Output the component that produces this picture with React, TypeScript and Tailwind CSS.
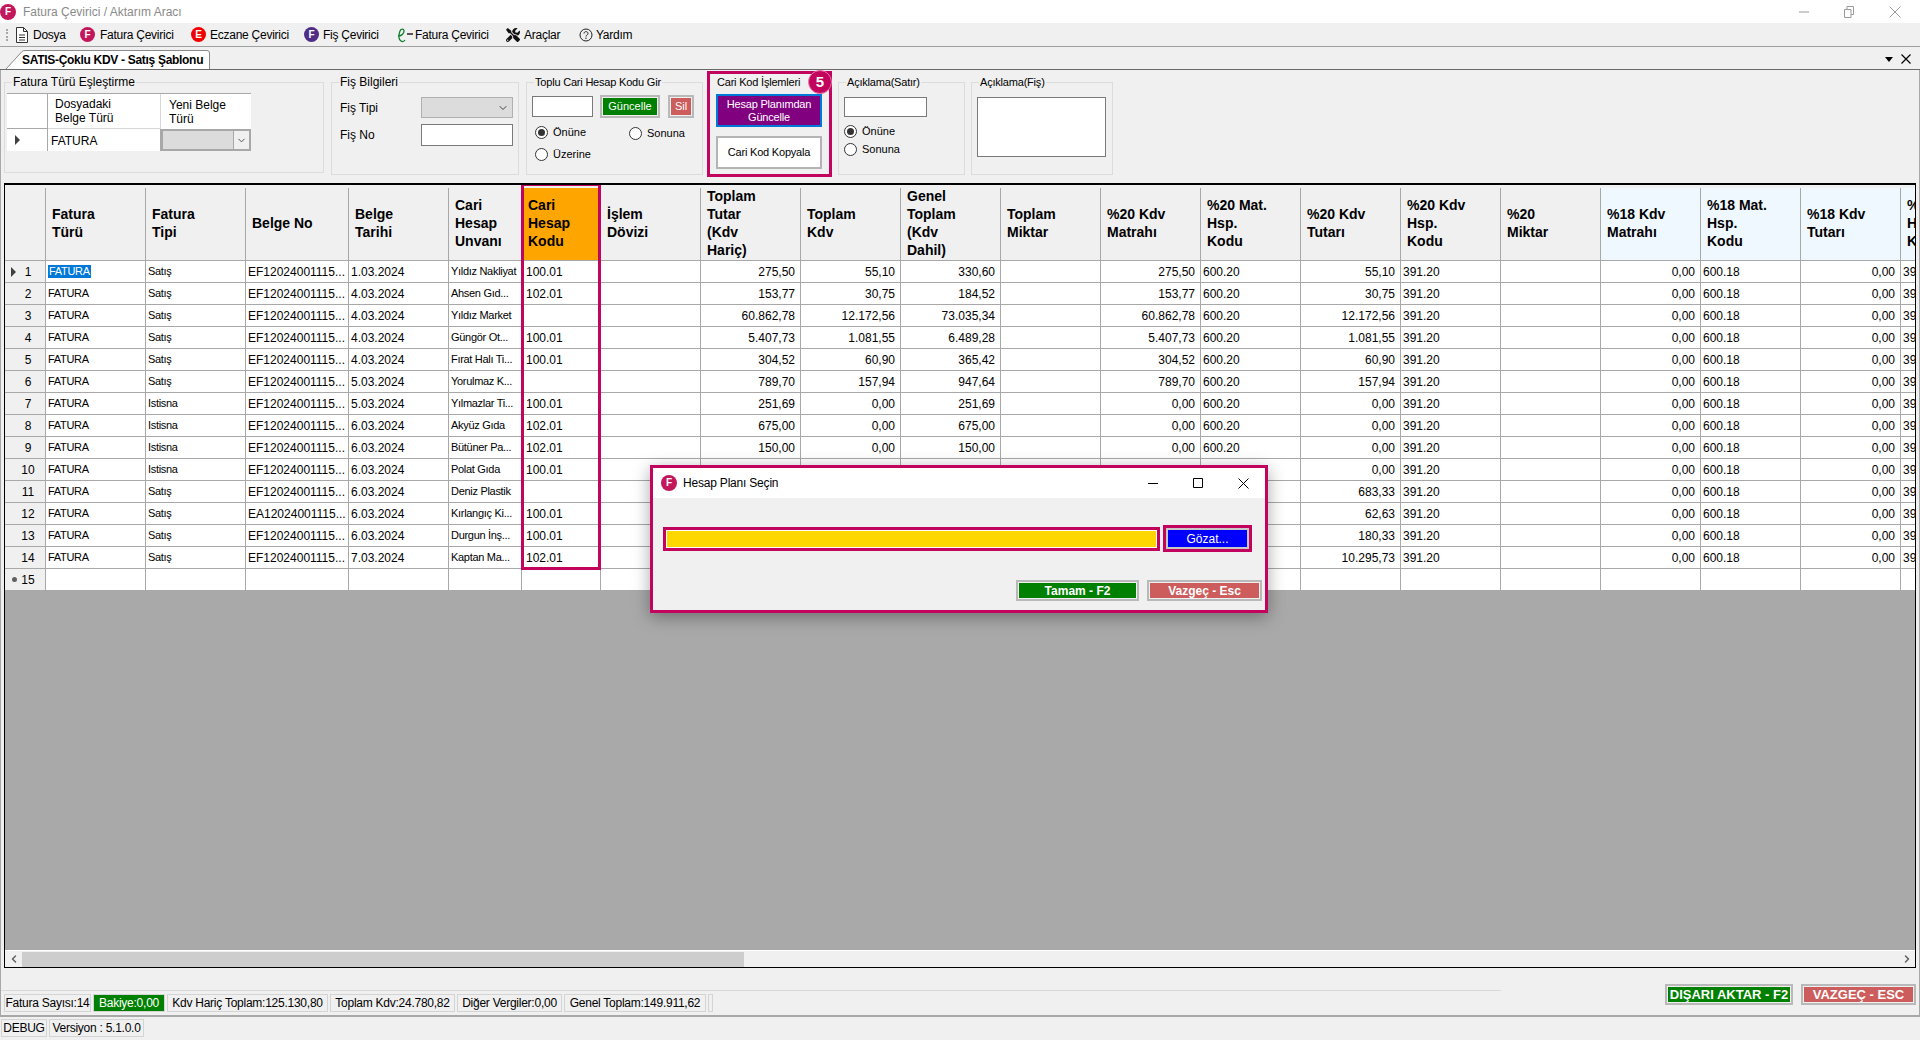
import { ChevronLeft, ChevronRight, ChevronDown } from "lucide-react";
import { FaTools } from "react-icons/fa";
import React from "react";

const gridCols = "grid grid-cols-[41px_100px_100px_103px_100px_73px_79px_repeat(14,100px)] w-[2000px]";

const headers = [
    "Fatura\nTürü",
    "Fatura\nTipi",
    "Belge No",
    "Belge\nTarihi",
    "Cari\nHesap\nUnvanı",
    "Cari\nHesap\nKodu",
    "İşlem\nDövizi",
    "Toplam\nTutar\n(Kdv\nHariç)",
    "Toplam\nKdv",
    "Genel\nToplam\n(Kdv\nDahil)",
    "Toplam\nMiktar",
    "%20 Kdv\nMatrahı",
    "%20 Mat.\nHsp.\nKodu",
    "%20 Kdv\nTutarı",
    "%20 Kdv\nHsp.\nKodu",
    "%20\nMiktar",
    "%18 Kdv\nMatrahı",
    "%18 Mat.\nHsp.\nKodu",
    "%18 Kdv\nTutarı",
    "%18 Kdv\nHsp.\nKodu",
];

// tipi, belge no, tarih, unvan, kod, tutar, kdv, genel, %20 matrah, %20 tutar
const rows = [
    ["Satış", "EF12024001115...", "1.03.2024", "Yıldız Nakliyat", "100.01", "275,50", "55,10", "330,60", "275,50", "55,10"],
    ["Satış", "EF12024001115...", "4.03.2024", "Ahsen Gıd...", "102.01", "153,77", "30,75", "184,52", "153,77", "30,75"],
    ["Satış", "EF12024001115...", "4.03.2024", "Yıldız Market", "", "60.862,78", "12.172,56", "73.035,34", "60.862,78", "12.172,56"],
    ["Satış", "EF12024001115...", "4.03.2024", "Güngör Ot...", "100.01", "5.407,73", "1.081,55", "6.489,28", "5.407,73", "1.081,55"],
    ["Satış", "EF12024001115...", "4.03.2024", "Fırat Halı Ti...", "100.01", "304,52", "60,90", "365,42", "304,52", "60,90"],
    ["Satış", "EF12024001115...", "5.03.2024", "Yorulmaz K...", "", "789,70", "157,94", "947,64", "789,70", "157,94"],
    ["Istisna", "EF12024001115...", "5.03.2024", "Yılmazlar Ti...", "100.01", "251,69", "0,00", "251,69", "0,00", "0,00"],
    ["Istisna", "EF12024001115...", "6.03.2024", "Akyüz Gıda", "102.01", "675,00", "0,00", "675,00", "0,00", "0,00"],
    ["Istisna", "EF12024001115...", "6.03.2024", "Bütüner Pa...", "102.01", "150,00", "0,00", "150,00", "0,00", "0,00"],
    ["Istisna", "EF12024001115...", "6.03.2024", "Polat Gıda", "100.01", "", "", "", "", "0,00"],
    ["Satış", "EF12024001115...", "6.03.2024", "Deniz Plastik", "", "", "", "", "", "683,33"],
    ["Satış", "EA12024001115...", "6.03.2024", "Kırlangıç Ki...", "100.01", "", "", "", "", "62,63"],
    ["Satış", "EF12024001115...", "6.03.2024", "Durgun İnş...", "100.01", "", "", "", "", "180,33"],
    ["Satış", "EF12024001115...", "7.03.2024", "Kaptan Ma...", "102.01", "", "", "", "", "10.295,73"],
];

function Logo({ letter, color, size }: { letter: string; color: string; size: string }) {
    return (
        <span className={`${size} ${color} rounded-full flex items-center justify-center text-white font-bold text-[10px] leading-none shrink-0`}>
            {letter}
        </span>
    );
}

function Radio({ label, checked, className }: { label: string; checked?: boolean; className?: string }) {
    return (
        <div className={`flex items-center gap-[5px] h-[13px] text-[11px] ${className ?? ""}`}>
            <span className="w-[13px] h-[13px] rounded-full border border-[#333] bg-white flex items-center justify-center shrink-0">
                {checked && <span className="w-[7px] h-[7px] rounded-full bg-[#333]" />}
            </span>
            <span>{label}</span>
        </div>
    );
}

function Group({ title, small, className, children }: { title: string; small?: boolean; className: string; children?: React.ReactNode }) {
    return (
        <div className={`relative border border-[#dcdcdc] ${className}`}>
            <span className={`absolute -top-[8px] left-[7px] bg-[#f0f0f0] px-[1px] leading-[14px] whitespace-nowrap ${small ? "text-[11px] tracking-[-0.2px]" : ""}`}>{title}</span>
            {children}
        </div>
    );
}

function ColorButton({ label, color, className }: { label: string; color: string; className: string }) {
    return (
        <div className={`border-2 border-[#b9b9b9] p-[1px] bg-[#f0f0f0] flex shrink-0 ${className}`}>
            <div className={`${color} flex-1 flex items-center justify-center text-white whitespace-nowrap`}>{label}</div>
        </div>
    );
}

function HeaderCell({ text, i }: { text: string; i: number }) {
    const bg = i === 5 ? "bg-[#ffa500]" : i >= 16 ? "bg-[#f0f8ff]" : "bg-[#f0f0f0]";
    return (
        <div className={`${bg} h-[72px] border-r border-[#a8a8a8] pl-[6px] pb-[2px] flex items-center text-[14px] font-bold leading-[18px] text-black whitespace-pre-line overflow-hidden`}>
            <span>{text}</span>
        </div>
    );
}

function Cell({ text, right, word, className, selected }: { text: string; right?: boolean; word?: boolean; className?: string; selected?: boolean }) {
    return (
        <div className={`border-r border-[#a8a8a8] h-[21px] flex items-center whitespace-nowrap overflow-hidden ${word ? "text-[11px] tracking-[-0.3px]" : ""} ${right ? "justify-end pr-[5px]" : (className ?? "pl-[2px]")}`}>
            {selected ? <span className="bg-[#0078d7] text-white px-[1px] h-[13px] leading-[13px]">{text}</span> : text}
        </div>
    );
}

function RowHead({ n, mark }: { n: number; mark?: "arrow" | "dot" }) {
    return (
        <div className="bg-[#f0f0f0] border-r border-[#a8a8a8] h-[21px] flex items-center text-[12px]">
            <span className="w-[12px] flex justify-end">
                {mark === "arrow" && <span className="border-y-[5px] border-y-transparent border-l-[5px] border-l-[#404040] mr-[1px]" />}
                {mark === "dot" && <span className="w-[5px] h-[5px] rounded-full bg-[#606060]" />}
            </span>
            <span className="w-[22px] text-center">{n}</span>
        </div>
    );
}

function TableRow({ r, n }: { r: string[]; n: number }) {
    return (
        <div className={`${gridCols} border-b border-[#a8a8a8] bg-white`}>
            <RowHead n={n} mark={n === 1 ? "arrow" : undefined} />
            <Cell text="FATURA" word selected={n === 1} />
            <Cell text={r[0]} word />
            <Cell text={r[1]} />
            <Cell text={r[2]} />
            <Cell text={r[3]} word />
            <Cell text={r[4]} className="pl-[4px]" />
            <Cell text="" />
            <Cell text={r[5]} right />
            <Cell text={r[6]} right />
            <Cell text={r[7]} right />
            <Cell text="" />
            <Cell text={r[8]} right />
            <Cell text={n < 10 ? "600.20" : ""} />
            <Cell text={r[9]} right />
            <Cell text="391.20" />
            <Cell text="" />
            <Cell text="0,00" right />
            <Cell text="600.18" />
            <Cell text="0,00" right />
            <Cell text="391.18" />
        </div>
    );
}

function StatusItem({ text, className }: { text: string; className: string }) {
    return (
        <div className={`h-[18px] border border-[#d4d4d4] flex items-center justify-center whitespace-nowrap tracking-[-0.25px] ${className}`}>{text}</div>
    );
}

function MenuText({ text, className }: { text: string; className: string }) {
    return <span className={`tracking-[-0.25px] whitespace-nowrap ${className}`}>{text}</span>;
}

export default function App() {
    return (
        <div className="w-[1920px] h-[1040px] relative overflow-hidden flex flex-col bg-[#f0f0f0] text-[12px] text-black [font-family:'Liberation_Sans',Arial,sans-serif]">
            {/* title bar */}
            <div className="h-[23px] bg-white flex items-center shrink-0">
                <Logo letter="F" color="bg-[#c2185b]" size="w-[16px] h-[16px]" />
                <span className="ml-[7px] text-[#8a8a8a]">Fatura Çevirici / Aktarım Aracı</span>
                <div className="ml-auto flex items-center text-[#9a9a9a] mr-[16px]">
                    <svg width="10" height="10" viewBox="0 0 10 10" className="mr-[35px]"><path d="M0 5h10" stroke="currentColor" /></svg>
                    <svg width="10" height="12" viewBox="0 0 10 12" className="mr-[35px]" fill="none" stroke="currentColor"><path d="M.5 3.5h6.5v8H.5zM3 3.5V.5h6.5v8H7" /></svg>
                    <svg width="12" height="12" viewBox="0 0 12 12" className="mr-[3px]" stroke="currentColor"><path d="M.5.5l11 11M11.500.5l-11 11" /></svg>
                </div>
            </div>

            {/* menu */}
            <div className="h-[24px] shrink-0 flex items-center border-b border-[#a0a0a0]">
                <span className="ml-[6px] w-[3px] h-[12px] border-l-2 border-dotted border-[#a8a8a8]" />
                <svg width="12" height="16" viewBox="0 0 12 16" className="ml-[7px]" fill="#fff" stroke="#333">
                    <path d="M.5.500h7l4 4v11H.5z" />
                    <path d="M7.500.500v4h4M3 8h6M3 10.500h6M3 13h6" fill="none" />
                </svg>
                <MenuText text="Dosya" className="ml-[5px] w-[32px]" />
                <Logo letter="F" color="bg-[#c2185b]" size="w-[15px] h-[15px] ml-[15px]" />
                <MenuText text="Fatura Çevirici" className="ml-[5px] w-[75px]" />
                <Logo letter="E" color="bg-[#f00000]" size="w-[15px] h-[15px] ml-[16px]" />
                <MenuText text="Eczane Çevirici" className="ml-[4px] w-[78px]" />
                <Logo letter="F" color="bg-[#4f2d86]" size="w-[15px] h-[15px] ml-[16px]" />
                <MenuText text="Fiş Çevirici" className="ml-[4px] w-[56px]" />
                <svg width="17" height="16" viewBox="0 0 17 16" className="ml-[17px]" fill="none">
                    <path d="M2 9c3 0 6-2 6-5 0-2.500-3-2.500-4 0-1.500 4-2 8 1 10 1.500 1 3 .5 4-1" stroke="#0b7d2a" strokeWidth="1.300" />
                    <path d="M11 7h6" stroke="#222" strokeWidth="1.500" />
                </svg>
                <MenuText text="Fatura Çevirici" className="ml-[2px] w-[74px]" />
                <FaTools size={14} className="ml-[17px] text-[#111]" />
                <MenuText text="Araçlar" className="ml-[4px] w-[37px]" />
                <svg width="14" height="14" viewBox="0 0 14 14" className="ml-[18px]" fill="none" stroke="#222">
                    <circle cx="7" cy="7" r="6" />
                    <path d="M5 5.500c0-2.500 4-2.500 4 0 0 1.500-2 1.500-2 3M7 9.500v1.500" />
                </svg>
                <MenuText text="Yardım" className="ml-[3px] w-[37px]" />
            </div>

            {/* tab strip */}
            <div className="h-[23px] shrink-0 flex items-end border-b border-[#696969] relative">
                <div className="relative ml-[6px] w-[204px] h-[19px] flex items-center pl-[16px] font-bold whitespace-nowrap">
                    <svg className="absolute inset-0" width="204" height="19" viewBox="0 0 204 19" fill="#fff" stroke="#8a8a8a">
                        <path d="M0 19L16 1.500Q17 .500 19 .500H201Q203.500 .500 203.500 3V19" />
                    </svg>
                    <span className="relative tracking-[-0.3px]">SATIS-Çoklu KDV - Satış Şablonu</span>
                </div>
                <div className="ml-auto mr-[9px] mb-[5px] flex items-center gap-[8px]">
                    <span className="border-x-[4px] border-x-transparent border-t-[5px] border-t-black" />
                    <svg width="10" height="10" viewBox="0 0 10 10" stroke="#000" strokeWidth="1.200"><path d="M.5.500l9 9M9.500.500l-9 9" /></svg>
                </div>
            </div>

            {/* content */}
            <div className="flex-1 flex flex-col border-x border-b-2 border-[#a8a8a8] min-h-0">
                <div className="h-[113px] shrink-0 pt-[12px] pl-[3px] flex items-start">
                    <Group title="Fatura Türü Eşleştirme" className="w-[320px] h-[91px]">
                        <div className="ml-[2px] mt-[10px] w-[244px] border-t border-[#a8a8a8] grid grid-cols-[41px_113px_90px]">
                            <div className="h-[35px] bg-white border-r border-b border-[#a8a8a8]" />
                            <div className="h-[35px] bg-white border-r border-b border-[#d8d8d8] pl-[7px] leading-[14px] flex items-center">Dosyadaki<br />Belge Türü</div>
                            <div className="h-[35px] bg-white pl-[8px] leading-[14px] flex items-center">Yeni Belge<br />Türü</div>
                            <div className="h-[22px] bg-white border-r border-[#a8a8a8] flex items-center pl-[8px]">
                                <span className="border-y-[5px] border-y-transparent border-l-[5px] border-l-[#404040]" />
                            </div>
                            <div className="h-[22px] bg-white border-r border-[#a8a8a8] pl-[3px] pt-[1px] flex items-center">FATURA</div>
                            <div className="h-[22px] bg-[#dcdcdc] border-2 border-[#a8a8a8] flex justify-end items-center">
                                <span className="w-[16px] h-full bg-[#f0f0f0] flex items-center justify-center border-l border-[#a8a8a8]">
                                    <ChevronDown size={11} className="text-[#444]" />
                                </span>
                            </div>
                        </div>
                    </Group>
                    <Group title="Fiş Bilgileri" className="ml-[7px] w-[188px] h-[93px]">
                        <div className="pl-[8px] pt-[14px] flex flex-col gap-[6px]">
                            <div className="flex items-center">
                                <span className="w-[81px]">Fiş Tipi</span>
                                <span className="w-[92px] h-[21px] bg-[#dcdcdc] border border-[#b0b0b0] flex items-center justify-end pr-[3px]">
                                    <ChevronDown size={12} className="text-[#444]" />
                                </span>
                            </div>
                            <div className="flex items-center">
                                <span className="w-[81px]">Fiş No</span>
                                <span className="w-[92px] h-[22px] bg-white border border-[#7a7a7a]" />
                            </div>
                        </div>
                    </Group>
                    <Group title="Toplu Cari Hesap Kodu Gir" small className="ml-[7px] w-[177px] h-[93px]">
                        <div className="pl-[5px] pt-[12px] flex items-center text-[11px]">
                            <span className="w-[61px] h-[21px] bg-white border border-[#7a7a7a]" />
                            <ColorButton label="Güncelle" color="bg-[#008000]" className="ml-[7px] w-[60px] h-[23px]" />
                            <ColorButton label="Sil" color="bg-[#cd5c5c]" className="ml-[8px] w-[26px] h-[23px]" />
                        </div>
                        <div className="pl-[8px] mt-[8px] flex">
                            <div className="flex flex-col gap-[9px] w-[94px]">
                                <Radio label="Önüne" checked />
                                <Radio label="Üzerine" />
                            </div>
                            <Radio label="Sonuna" className="mt-[1px]" />
                        </div>
                    </Group>
                    <div className="relative ml-[4px] -mt-[11px] w-[125px] h-[106px] border-[3px] border-[#c2045e] shrink-0 text-[11px] tracking-[-0.2px]">
                        <span className="block ml-[7px] mt-[1px] leading-[14px]">Cari Kod İşlemleri</span>
                        <div className="ml-[6px] mt-[5px] w-[106px] h-[33px] border-2 border-[#0078d7] bg-[#800080] text-white leading-[13px] text-center flex items-center justify-center">
                            Hesap Planımdan<br />Güncelle
                        </div>
                        <div className="ml-[6px] mt-[9px] w-[106px] h-[33px] border-2 border-[#b4b4b4] bg-white p-[1px] flex items-center justify-center">Cari Kod Kopyala</div>
                        <span className="absolute left-[98px] -top-[4px] w-[24px] h-[24px] rounded-full bg-[#c2045e] border border-[#e878a8] text-white font-bold text-[15px] tracking-normal flex items-center justify-center">5</span>
                    </div>
                    <Group title="Açıklama(Satır)" small className="ml-[6px] w-[127px] h-[93px]">
                        <div className="pl-[5px] pt-[14px] flex flex-col">
                            <span className="w-[83px] h-[20px] bg-white border border-[#7a7a7a]" />
                            <Radio label="Önüne" checked className="mt-[8px]" />
                            <Radio label="Sonuna" className="mt-[5px]" />
                        </div>
                    </Group>
                    <Group title="Açıklama(Fiş)" small className="ml-[6px] w-[142px] h-[93px]">
                        <div className="pl-[5px] pt-[14px]">
                            <div className="w-[129px] h-[60px] bg-white border border-[#7a7a7a]" />
                        </div>
                    </Group>
                </div>

                {/* data grid */}
                <div className="relative ml-[3px] mr-[3px] h-[785px] shrink-0 border border-black border-t-2 flex flex-col overflow-hidden bg-[#a9a9a9]">
                    <div className={`${gridCols} pt-[3px] bg-[#f0f0f0] border-b border-[#a8a8a8]`}>
                        <div className="h-[72px] border-r border-[#a8a8a8]" />
                        {headers.map((h, i) => (
                            <HeaderCell key={h} text={h} i={i} />
                        ))}
                    </div>
                    {rows.map((r, i) => (
                        <TableRow key={i} r={r} n={i + 1} />
                    ))}
                    <div className={`${gridCols} border-b border-[#a8a8a8] bg-white`}>
                        <RowHead n={15} mark="dot" />
                        {headers.map((h) => (
                            <Cell key={h} text="" />
                        ))}
                    </div>
                    <div className="flex-1" />
                    <div className="h-[17px] shrink-0 bg-[#f0f0f0] border-t border-white flex items-center">
                        <span className="w-[17px] flex justify-center"><ChevronLeft size={12} strokeWidth={3} className="text-[#606060]" /></span>
                        <span className="w-[722px] h-[15px] bg-[#cdcdcd]" />
                        <span className="ml-auto w-[17px] flex justify-center"><ChevronRight size={12} strokeWidth={3} className="text-[#606060]" /></span>
                    </div>
                    <div className="absolute left-[516px] -top-[2px] w-[80px] h-[387px] border-[3px] border-[#c2045e]" />
                </div>

                {/* footer */}
                <div className="flex-1 flex">
                    <div className="w-[1500px]">
                        <div className="h-[23px] border-b border-[#d8d8d8]" />
                        <div className="mt-[3px] ml-[3px] flex gap-[2px]">
                            <StatusItem text="Fatura Sayısı:14" className="w-[87px]" />
                            <StatusItem text="Bakiye:0,00" className="w-[72px] bg-[#008000] text-white" />
                            <StatusItem text="Kdv Hariç Toplam:125.130,80" className="w-[161px]" />
                            <StatusItem text="Toplam Kdv:24.780,82" className="w-[125px]" />
                            <StatusItem text="Diğer Vergiler:0,00" className="w-[105px]" />
                            <StatusItem text="Genel Toplam:149.911,62" className="w-[142px]" />
                            <div className="w-[5px] h-[18px] border border-[#d4d4d4]" />
                        </div>
                    </div>
                    <div className="ml-auto mr-[3px] mt-[16px] flex gap-[8px] font-bold text-[13px]">
                        <ColorButton label="DIŞARI AKTAR - F2" color="bg-[#008000]" className="w-[128px] h-[21px]" />
                        <ColorButton label="VAZGEÇ - ESC" color="bg-[#cd5c5c]" className="w-[115px] h-[21px]" />
                    </div>
                </div>
            </div>

            {/* status bar */}
            <div className="h-[23px] shrink-0 pl-[1px] pt-[2px] flex gap-[2px]">
                <StatusItem text="DEBUG" className="w-[46px]" />
                <StatusItem text="Versiyon : 5.1.0.0" className="w-[95px]" />
            </div>

            {/* dialog */}
            <div className="absolute left-[650px] top-[465px] w-[618px] h-[148px] border-[3px] border-[#c2045e] bg-[#f0f0f0] shadow-[0_4px_16px_rgba(0,0,0,0.35)] flex flex-col">
                <div className="h-[30px] bg-white shrink-0 flex items-center">
                    <Logo letter="F" color="bg-[#c2185b]" size="w-[16px] h-[16px] ml-[8px]" />
                    <span className="ml-[6px] tracking-[-0.2px]">Hesap Planı Seçin</span>
                    <div className="ml-auto flex items-center text-black">
                        <svg width="10" height="10" viewBox="0 0 10 10" className="mr-[35px]"><path d="M0 5.500h10" stroke="currentColor" /></svg>
                        <svg width="10" height="10" viewBox="0 0 10 10" className="mr-[35px]" fill="none" stroke="currentColor"><path d="M.5.500h9v9h-9z" /></svg>
                        <svg width="11" height="11" viewBox="0 0 11 11" className="mr-[16px]" stroke="currentColor"><path d="M.5.500l10 10M10.500.500l-10 10" /></svg>
                    </div>
                </div>
                <div className="pl-[10px] pt-[28px] flex items-center gap-[3px]">
                    <div className="w-[497px] h-[24px] border-[3px] border-[#c2045e]">
                        <div className="h-full border border-white bg-[#ffd700]" />
                    </div>
                    <div className="w-[89px] h-[27px] border-[3px] border-[#c2045e] -mt-[1px]">
                        <div className="h-full border-2 border-[#c8c8c8] bg-[#0000ff] text-white flex items-center justify-center">Gözat...</div>
                    </div>
                </div>
                <div className="mt-[28px] mr-[3px] self-end flex gap-[8px] font-bold">
                    <ColorButton label="Tamam - F2" color="bg-[#008000]" className="w-[123px] h-[21px]" />
                    <ColorButton label="Vazgeç - Esc" color="bg-[#cd5c5c]" className="w-[115px] h-[21px]" />
                </div>
            </div>
        </div>
    );
}
